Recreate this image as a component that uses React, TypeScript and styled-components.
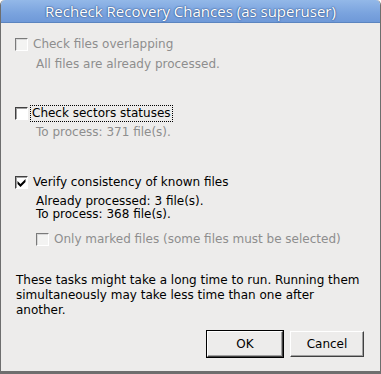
import React from "react";
import styled, { createGlobalStyle } from "styled-components";

const Global = createGlobalStyle`
  html, body { margin: 0; padding: 0; background: #ffffff; }
  body { font-family: "DejaVu Sans", "Liberation Sans", sans-serif; }
`;

const Window = styled.div`
  width: 381px;
  height: 374px;
  box-sizing: border-box;
  display: flex;
  flex-direction: column;
  background: #edeceb;
  border-left: 1px solid #6e6e6e;
  border-right: 1px solid #6e6e6e;
  border-bottom: 3px solid #6e6e6e;
  border-radius: 5px 5px 0 0;
  overflow: hidden;
`;

const TitleBar = styled.div`
  height: 23px;
  flex: none;
  display: flex;
  align-items: center;
  justify-content: center;
  background: linear-gradient(#93b8e8, #7aa3de 60%, #6f99d8);
  border-bottom: 1px solid #5b84bf;
  box-sizing: border-box;
  margin: 0 -1px;
  border-radius: 5px 5px 0 0;
  color: #ffffff;
  font-family: "Open Sans", "Noto Sans", sans-serif;
  font-size: 15px;
  text-shadow: 0 0 2px #2d4f86, 0 0 1px #2d4f86;
`;

const Body = styled.div`
  flex: 1;
  display: flex;
  flex-direction: column;
  padding: 14px 16px 0 14px;
  font-size: 12px;
  color: #000000;
`;

const Row = styled.div<{ $top: number; $indent?: number }>`
  display: flex;
  align-items: center;
  height: 14px;
  margin-top: ${(p) => p.$top}px;
  margin-left: ${(p) => p.$indent ?? 0}px;
`;

const Box = styled.span<{ $disabled?: boolean }>`
  width: 13px;
  height: 13px;
  flex: none;
  box-sizing: border-box;
  background: ${(p) => (p.$disabled ? "#f3f3f2" : "#ffffff")};
  border-top: 1px solid ${(p) => (p.$disabled ? "#7a7a7a" : "#404040")};
  border-left: 1px solid ${(p) => (p.$disabled ? "#7a7a7a" : "#404040")};
  border-right: 1px solid #ffffff;
  border-bottom: 1px solid #ffffff;
  box-shadow: inset 1px 1px 0 ${(p) => (p.$disabled ? "#d8d8d8" : "#a0a0a0")};
  display: flex;
  align-items: center;
  justify-content: center;
`;

const Label = styled.span<{ $disabled?: boolean; $focus?: boolean }>`
  margin-left: 5px;
  white-space: nowrap;
  color: ${(p) => (p.$disabled ? "#8e8e8e" : "#000000")};
  ${(p) =>
    p.$focus
      ? `outline: 1px dotted #000; outline-offset: 0px; padding: 0 1px; margin-left: 3px; line-height: 15px;`
      : ""}
`;

const Desc = styled.div<{ $top: number; $disabled?: boolean; $lh?: number }>`
  margin-top: ${(p) => p.$top}px;
  margin-left: 21px;
  line-height: ${(p) => p.$lh ?? 14}px;
  color: ${(p) => (p.$disabled ? "#8e8e8e" : "#000000")};
  white-space: nowrap;
`;

const Para = styled.p`
  margin: 27px 0 0 1px;
  line-height: 15px;
  color: #000000;
`;

const Buttons = styled.div`
  display: flex;
  justify-content: flex-end;
  gap: 7px;
  margin-top: 13px;
`;

const Button = styled.button<{ $default?: boolean; $w: number }>`
  width: ${(p) => p.$w}px;
  height: 26px;
  box-sizing: border-box;
  font-family: "DejaVu Sans", sans-serif;
  font-size: 12px;
  color: #000;
  background: #edeceb;
  padding: 0;
  border-top: 1px solid #ffffff;
  border-left: 1px solid #ffffff;
  border-right: 1px solid #404040;
  border-bottom: 1px solid #404040;
  box-shadow: ${(p) =>
    p.$default
      ? "0 0 0 1px #000000, inset -1px -1px 0 #a0a0a0"
      : "inset -1px -1px 0 #a0a0a0"};
`;

const Check = () => (
  <svg width="9" height="9" viewBox="0 0 9 9">
    <path d="M0.5 3 L3.5 6 L8.5 1 L8.5 4 L3.5 9 L0.5 6 Z" fill="#000" />
  </svg>
);

export default function App() {
  return (
    <>
      <Global />
      <Window>
        <TitleBar>Recheck Recovery Chances (as superuser)</TitleBar>
        <Body>
          <Row $top={0}>
            <Box $disabled />
            <Label $disabled>Check files overlapping</Label>
          </Row>
          <Desc $top={6} $disabled>
            All files are already processed.
          </Desc>
          <Row $top={35}>
            <Box />
            <Label $focus>Check sectors statuses</Label>
          </Row>
          <Desc $top={5} $disabled>
            To process: 371 file(s).
          </Desc>
          <Row $top={36}>
            <Box>
              <Check />
            </Box>
            <Label>Verify consistency of known files</Label>
          </Row>
          <Desc $top={6} $lh={13}>
            Already processed: 3 file(s).
            <br />
            To process: 368 file(s).
          </Desc>
          <Row $top={11} $indent={21}>
            <Box $disabled />
            <Label $disabled>Only marked files (some files must be selected)</Label>
          </Row>
          <Para>
            These tasks might take a long time to run. Running them
            simultaneously may take less time than one after another.
          </Para>
          <Buttons>
            <Button $default $w={76}>OK</Button>
            <Button $w={74}>Cancel</Button>
          </Buttons>
        </Body>
      </Window>
    </>
  );
}
